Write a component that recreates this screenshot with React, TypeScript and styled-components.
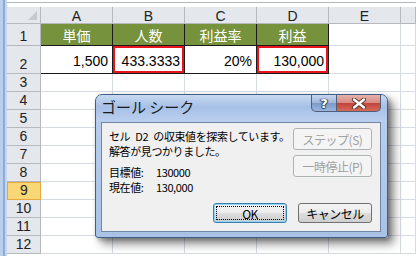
import * as React from 'react';
import styled, {createGlobalStyle, css} from 'styled-components';

const GlobalStyle = createGlobalStyle`
  html, body {
    margin: 0;
    padding: 0;
    background: #ffffff;
    overflow: hidden;
  }
`;

const SHEET_FONT = `"Liberation Sans", "Noto Sans CJK JP", sans-serif`;
const UI_FONT = `"Noto Sans CJK JP", sans-serif`;

const columns = ['A', 'B', 'C', 'D', 'E'];
const headerRow = ['単価', '人数', '利益率', '利益'];
const valueRow = ['1,500', '433.3333', '20%', '130,000'];
const emptyRows = [3, 4, 5, 6, 7, 8, 9, 10, 11, 12];
const activeRow = 9;

export default function App() {
    return (
        <>
            <GlobalStyle/>
            <Screen>
                <WindowEdge/>
                <SheetArea>
                    <FormulaStrip/>
                    <Grid>
                        <Corner><CornerTriangle/></Corner>
                        {columns.map(c => <ColHeader key={c}>{c}</ColHeader>)}
                        <ColHeader/>

                        <RowHeader>1</RowHeader>
                        {headerRow.map(t => <TitleCell key={t}>{t}</TitleCell>)}
                        <Cell/><Cell/>

                        <RowHeader>2</RowHeader>
                        {valueRow.map((v, i) => (
                            <ValueCell key={v} $marked={i === 1 || i === 3}>{v}</ValueCell>
                        ))}
                        <Cell/><Cell/>

                        {emptyRows.map(r => (
                            <React.Fragment key={r}>
                                <RowHeader $active={r === activeRow}>{r}</RowHeader>
                                {columns.map(c => <Cell key={c}/>)}
                                <Cell/>
                            </React.Fragment>
                        ))}
                    </Grid>
                </SheetArea>
                <GoalSeekDialog/>
            </Screen>
        </>
    );
}

const GoalSeekDialog = () => (
    <Dialog>
        <TitleBar>
            <Title>ゴール シーク</Title>
            <CaptionButtons>
                <HelpButton>?</HelpButton>
                <CloseButton>
                    <svg width="16" height="11" viewBox="0 0 16 11">
                        <path d="M3 1.5 L13 9.5 M13 1.5 L3 9.5" stroke="#5a302c" strokeWidth="4.2" strokeLinecap="round"/>
                        <path d="M3 1.5 L13 9.5 M13 1.5 L3 9.5" stroke="#ffffff" strokeWidth="2.4" strokeLinecap="round"/>
                    </svg>
                </CloseButton>
            </CaptionButtons>
        </TitleBar>
        <Client>
            <Body>
                <Texts>
                    <Message>
                        <Line>セル{'\u2002'}D2{'\u2002'}の収束値を探索しています。</Line>
                        <Line>解答が見つかりました。</Line>
                    </Message>
                    <Values>
                        <Line><Label>目標値:</Label>130000</Line>
                        <Line><Label>現在値:</Label>130,000</Line>
                    </Values>
                </Texts>
                <SideButtons>
                    <Button $wide disabled>ステップ(S)</Button>
                    <Button $wide disabled>一時停止(P)</Button>
                </SideButtons>
            </Body>
            <Footer>
                <Button $default><FocusRing>OK</FocusRing></Button>
                <Button>キャンセル</Button>
            </Footer>
        </Client>
    </Dialog>
);

const Screen = styled.div`
  position: relative;
  width: 416px;
  height: 256px;
  display: flex;
  overflow: hidden;
  background: #ffffff;
  font-family: ${SHEET_FONT};
`;

const WindowEdge = styled.div`
  width: 7px;
  flex: none;
  background: linear-gradient(to right, #b9cfeb 0, #b9cfeb 3px, #8eabd6 3px, #8eabd6 5px, #c5d7ee 5px);
`;

const SheetArea = styled.div`
  flex: 1;
  display: flex;
  flex-direction: column;
`;

const FormulaStrip = styled.div`
  height: 7px;
  flex: none;
  box-sizing: border-box;
  border-top: 2px solid #ffffff;
  background: linear-gradient(to bottom, #b4b8bd 0, #b4b8bd 1px, #ffffff 1px);
`;

const Grid = styled.div`
  display: grid;
  grid-template-columns: 34px 72px 72px 72px 72px 72px 1fr;
  grid-template-rows: 17px 22px 28px repeat(10, 18px);
`;

const headerBase = css`
  box-sizing: border-box;
  background: #e4e7eb;
  border-right: 1px solid #b5b9be;
  border-bottom: 1px solid #b5b9be;
  color: #222222;
  font-size: 14px;
  line-height: 14px;
  display: flex;
  justify-content: center;
`;

const Corner = styled.div`
  ${headerBase};
  position: relative;
`;

const CornerTriangle = styled.div`
  position: absolute;
  right: 3px;
  bottom: 3px;
  width: 0;
  height: 0;
  border-left: 9px solid transparent;
  border-bottom: 9px solid #c6c9cd;
`;

const ColHeader = styled.div`
  ${headerBase};
  align-items: center;
  padding-top: 1px;
`;

const RowHeader = styled.div<{ $active?: boolean }>`
  ${headerBase};
  align-items: flex-end;
  padding-bottom: 2px;
  ${p => p.$active && css`
    background: #fad776;
    border: 1px solid #e4a93c;
  `}
`;

const Cell = styled.div`
  box-sizing: border-box;
  border-right: 1px solid #d6dbe3;
  border-bottom: 1px solid #d6dbe3;
`;

const TitleCell = styled.div`
  box-sizing: border-box;
  background: #76923c;
  color: #ffffff;
  border-right: 1px solid #1a1a1a;
  border-bottom: 1px solid #1a1a1a;
  font-size: 14px;
  display: flex;
  align-items: center;
  justify-content: center;
  padding-top: 1px;
`;

const ValueCell = styled.div<{ $marked?: boolean }>`
  box-sizing: border-box;
  border-right: 1px solid #1a1a1a;
  border-bottom: 1px solid #1a1a1a;
  font-size: 14px;
  line-height: 14px;
  color: #000000;
  display: flex;
  align-items: flex-end;
  justify-content: flex-end;
  padding: 0 4px 5px 0;
  ${p => p.$marked && css`
    box-shadow: inset 0 0 0 2px #e8141b;
  `}
`;

const Dialog = styled.div`
  position: absolute;
  left: 95px;
  top: 94px;
  width: 293px;
  height: 144px;
  box-sizing: border-box;
  display: flex;
  flex-direction: column;
  border: 1px solid #3f5f88;
  border-radius: 7px 7px 3px 3px;
  background: linear-gradient(to bottom, #9ab7e0 0, #b7cdeb 30px, #a9c2e6 100%);
  box-shadow: 6px 6px 10px rgba(0, 0, 0, 0.45), 2px 2px 4px rgba(0, 0, 0, 0.25);
  font-family: ${UI_FONT};
`;

const TitleBar = styled.div`
  height: 27px;
  flex: none;
  display: flex;
  align-items: flex-start;
  justify-content: space-between;
  padding: 0 6px 0 5px;
  border-radius: 6px 6px 0 0;
  background: linear-gradient(to bottom, #c8d9f0 0, #a6c0e6 12px, #b9cff0 26px);
`;

const Title = styled.div`
  margin-top: 3px;
  font-size: 15px;
  line-height: 17px;
  color: #1a1a1a;
`;

const CaptionButtons = styled.div`
  display: flex;
`;

const captionBase = css`
  height: 17px;
  box-sizing: border-box;
  display: flex;
  align-items: center;
  justify-content: center;
  border: 1px solid #4e5f78;
  border-top: none;
`;

const HelpButton = styled.div`
  ${captionBase};
  width: 26px;
  border-radius: 0 0 0 5px;
  background: linear-gradient(to bottom, #c6d6ee 0, #9fb6da 50%, #7e99c6 51%, #98b4df 100%);
  color: #ffffff;
  font-family: "DejaVu Sans", sans-serif;
  font-weight: bold;
  font-size: 13px;
  text-shadow: 0 0 1px #2c3e5c, 1px 0 1px #2c3e5c, -1px 0 1px #2c3e5c, 0 1px 1px #2c3e5c;
`;

const CloseButton = styled.div`
  ${captionBase};
  width: 44px;
  border-left: none;
  border-radius: 0 0 5px 0;
  background: linear-gradient(to bottom, #e7b1aa 0, #d78b80 50%, #c3433a 51%, #d46a5a 100%);
`;

const Client = styled.div`
  flex: 1;
  margin: 0 6px 5px 5px;
  box-sizing: border-box;
  border: 1px solid #7286a4;
  background: #f0f0f0;
  display: flex;
  flex-direction: column;
  padding: 5px 8px 8px 7px;
  font-size: 11px;
  color: #000000;
`;

const Body = styled.div`
  display: flex;
  justify-content: space-between;
`;

const Texts = styled.div`
  display: flex;
  flex-direction: column;
  padding-top: 1px;
`;

const Message = styled.div`
  display: flex;
  flex-direction: column;
`;

const Values = styled.div`
  display: flex;
  flex-direction: column;
  margin-top: 6px;
`;

const Line = styled.div`
  display: flex;
  line-height: 15px;
  white-space: pre;
  letter-spacing: -0.4px;
`;

const Label = styled.span`
  width: 47px;
`;

const SideButtons = styled.div`
  display: flex;
  flex-direction: column;
  gap: 5px;
`;

const Footer = styled.div`
  margin-top: auto;
  display: flex;
  justify-content: flex-end;
  gap: 11px;
`;

const Button = styled.button<{ $wide?: boolean; $default?: boolean }>`
  width: ${p => (p.$wide ? 79 : 74)}px;
  height: ${p => (p.$wide ? 22 : 20)}px;
  box-sizing: border-box;
  padding: 0;
  display: flex;
  align-items: center;
  justify-content: center;
  border: 1px solid #707070;
  border-radius: 3px;
  background: linear-gradient(to bottom, #f4f4f4 0, #ebebeb 50%, #dddddd 51%, #cfcfcf 100%);
  font-family: ${UI_FONT};
  font-size: 12px;
  letter-spacing: -0.5px;
  color: #000000;
  ${p => p.$default && css`
    border-color: #3c7fb1;
    box-shadow: inset 0 0 0 1px #8fd3f7;
  `}
  &:disabled {
    border-color: #adb2b5;
    background: #f4f4f4;
    color: #a0a0a0;
  }
`;

const FocusRing = styled.span`
  display: flex;
  align-items: center;
  justify-content: center;
  width: 68px;
  height: 14px;
  border: 1px dotted #000000;
  box-sizing: border-box;
`;
